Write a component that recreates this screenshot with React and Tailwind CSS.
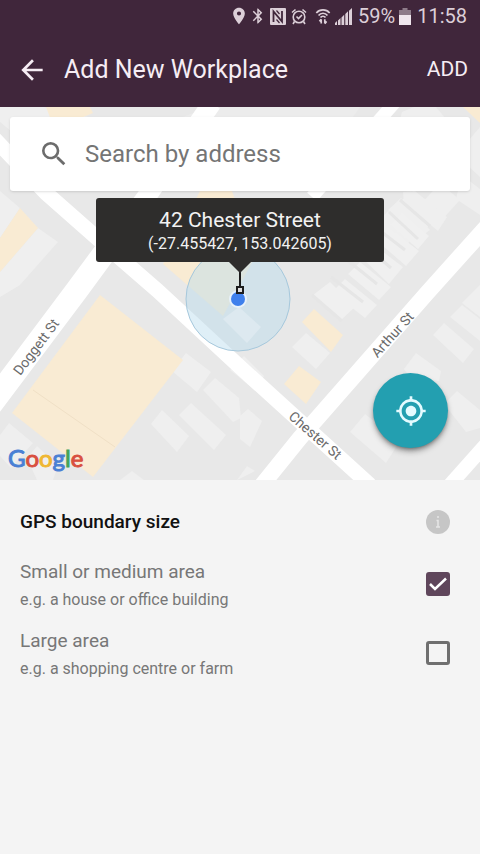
import React, { useState } from 'react';
import { MdArrowBack, MdBluetooth, MdLocationOn, MdMyLocation, MdSearch } from 'react-icons/md';

const AREAS = [
  { id: 'small', title: 'Small or medium area', hint: 'e.g. a house or office building' },
  { id: 'large', title: 'Large area', hint: 'e.g. a shopping centre or farm' },
];

const StatusBar = () => (
  <div className="flex h-8 items-center justify-end pr-[13px] text-xl text-[#dccfd8]">
    <MdLocationOn size={20} />
    <MdBluetooth size={18} />
    <svg className="ml-[3px]" width="16" height="17" viewBox="0 0 16 17">
      <rect width="16" height="17" rx="1" fill="currentColor" />
      <path d="M3.500 14V3.500L12 13.500V3" fill="none" stroke="#40263b" strokeWidth="1.800" />
      <path d="M6.500 2.500L9.500 6M6.500 11.500L9.500 15" fill="none" stroke="#40263b" strokeWidth="1.200" />
    </svg>
    <svg className="ml-[5px]" width="16" height="17" viewBox="0 0 16 17" fill="none" stroke="currentColor" strokeWidth="1.600">
      <circle cx="8" cy="9" r="5.800" />
      <path d="M1 4.500L4.500 1.500M15 4.500L11.500 1.500M3.500 13.500L2 16M12.500 13.500L14 16M5.500 8.500L7.500 10.500 11 7" />
    </svg>
    <svg className="ml-2" width="16" height="17" viewBox="0 0 18 18" fill="none" stroke="currentColor" strokeWidth="1.900">
      <path d="M1.500 5C5.500 0.500 12.500 0.500 16.500 5M4 7.800C6.500 4.500 11.500 4.500 14 7.800M6.200 10.200C7.500 8.200 10.500 8.200 11.800 10.200" />
      <path d="M7 17v-5M5 14.500l2-2.500M11 12v5M13 14.500l-2 2.500" />
    </svg>
    <svg className="ml-1" width="17" height="17" viewBox="0 0 17 17" fill="currentColor">
      <path d="M0 15l2-2v4H0zM3 12.500l2.500-2.500v7H3zM6.500 9.500l2.700-2.700V17H6.500zM10.300 6l2.700-2.700V17h-2.700zM14 2.700L17 0v17h-3z" />
    </svg>
    <span className="ml-[6px]">59%</span>
    <svg className="ml-1" width="12" height="17" viewBox="0 0 12 17">
      <path d="M3.500 0h5v2H12v15H0V2h3.500z" fill="#8d7b89" />
      <path d="M0 7h12v10H0z" fill="#efe6ed" />
    </svg>
    <span className="ml-[6px]">11:58</span>
  </div>
);

const MapCanvas = () => (
  <svg
    className="absolute inset-0 h-full w-full"
    viewBox="0 0 480 373"
    preserveAspectRatio="xMidYMid slice"
    role="img"
    aria-label="Map"
  >
    <rect width="480" height="373" fill="#e8e8e8" />

    {/* blocks */}
    <g fill="#efefef">
      <path d="M0 0h44L88 10 48 55 0 15zM0 84L20 101 0 131zM38 121l20 14-38 43-20 12v-25z" />
      <path d="M150 22l60 -22h150l-60 84h-130z" fill="#ececec" />
      <path d="M402 5l12-5h22l10 12-10 8h-38z" />
      <path d="M480 20l-24 28 24 22zM462 68l18 14v26l-24-16z" />
      <path d="M420 98l20-22 20 17-20 22z" />
      <path d="M408 88l15 12 14 10-11 12-31-23z" fill="#f1f1f1" />
      <path d="M403 85l12-1 32 26-9 14-34-28zM388 103l13-12 29 32-14 10zM376 117l12-13 27 24-11 13z" />
      <path d="M390 118l12-13 27 24-11 13zM376 133l12-13 31 24-13 15zM362 151l12-13 29 22-14 17zM348 167l12-12 31 25-12 13zM332 185l13-13 32 26-12 13zM313 188l17-13 25 25-15 14z" fill="#f0f0f0" />
      <path d="M172 264l14-18 25 19-14 20zM151 317l11-14 27 26-12 16zM179 308l12-12 35 32-12 15zM203 283l12-12 24 20 2 20-8 4zM230 263l14-14 20 20-8 15z" />
      <path d="M292 240l14-14 24 20-14 16zM240 309l8-7 14 12-12 26-10-8z" />
      <path d="M433 228l11-12 30 26-11 14zM450 210l12-12 18 14v22zM462 196l18-18v32z" />
      <path d="M404 262l12-16 25 18-2 10-30-5zM350 325l15-18 35 27-14 22zM444 297l13-13 23 19v18l-14 4z" />
      <path d="M0 328l9-12 24 20-22 25-11-12zM27 351l10-12 21 20-5 14h-16zM120 373l12-9 12 9zM237 373l10-14 8 5z" />
    </g>
    {/* gaps between the lots */}
    <path
      d="M400 93l30 26M389 105l29 27M374 119l31 24M361 135l30 26M346 152l31 25M331 170l32 25M312 188l30 26"
      stroke="#e6e6e6"
      strokeWidth="3"
    />

    <g fill="#f9ebd3">
      <path d="M46 0h44l3 6-17 7h-25zM463 0h17v16zM20 101L38 121 0 165v-34z" />
      <path d="M100 188l83 65-90 117L12 306z" />
      <path d="M200 84h32l23 66-32 59-60-52z" />
      <path d="M302 215l12-13 29 26-12 17zM284 277l15-18 22 16-15 22z" />
    </g>
    <path d="M33 283L115 340" fill="none" stroke="#f0e0c6" />

    {/* roads */}
    <g fill="none" stroke="#fff">
      <path d="M-10 27L46 86 105 138 157 183 240 260 370 378" strokeWidth="15" />
      <path d="M-16 307L77 183 105 145" strokeWidth="23" />
      <path d="M105 145L150 85 212 -4" strokeWidth="19" />
      <path d="M396 -6L312 90" strokeWidth="13" />
      <path d="M262 378L300 331 427 186 488 118" strokeWidth="16" />
      <path d="M448 380L488 335" strokeWidth="14" />
    </g>

    <g fill="#6b6b6b" className="font-[Roboto,sans-serif] text-[14px]" textAnchor="middle">
      <text transform="translate(40 243) rotate(-53)">Doggett St</text>
      <text transform="translate(396 231) rotate(-48)">Arthur St</text>
      <text transform="translate(312 332) rotate(41)">Chester St</text>
    </g>

    {/* current position */}
    <circle cx="238" cy="192" r="52" fill="#b9dbee" fillOpacity="0.45" stroke="#a6c8dc" />
    <path d="M223 212l16-12 22 20-14 16z" fill="#dde9f0" />
    <circle cx="238" cy="192" r="9" fill="#e8f2fb" />
    <circle cx="238" cy="192" r="7" fill="#3f80ec" />
    <path d="M240 160v20" stroke="#1c1c1c" strokeWidth="2" />
    <rect x="237" y="180" width="6" height="6" fill="#ddd" stroke="#1c1c1c" strokeWidth="2" />
  </svg>
);

const GoogleLogo = () => (
  <div
    className="absolute bottom-2 left-2 font-[Lato,sans-serif] text-2xl leading-7 font-normal [-webkit-text-stroke:1px]"
    aria-label="Google"
  >
    <span className="text-[#4a80d4]">G</span>
    <span className="text-[#d9503f]">o</span>
    <span className="text-[#efb732]">o</span>
    <span className="text-[#4a80d4]">g</span>
    <span className="text-[#41a35a]">l</span>
    <span className="text-[#d9503f]">e</span>
  </div>
);

const AreaOption = ({ area, checked, onChange }) => (
  <label htmlFor={area.id} className="flex items-center justify-between">
    <span>
      <span className="block text-[19px] leading-7">{area.title}</span>
      <span className="block text-base leading-7">{area.hint}</span>
    </span>
    <span className="mb-1 grid">
      <input
        id={area.id}
        type="checkbox"
        checked={checked}
        onChange={onChange}
        className="col-start-1 row-start-1 size-6 appearance-none rounded-[3px] border-[3px] border-[#6f6f6f] checked:border-[#5f465b] checked:bg-[#5f465b]"
      />
      {checked && (
        <svg className="pointer-events-none col-start-1 row-start-1" width="24" height="24" viewBox="0 0 24 24">
          <path d="M4 12l5 5L20 6.500" fill="none" stroke="#fff" strokeWidth="2.500" />
        </svg>
      )}
    </span>
  </label>
);

const App = () => {
  const [selected, setSelected] = useState('small');

  return (
    <div className="min-h-screen bg-[#f4f4f4] font-[Roboto,sans-serif]">
      <header className="bg-[#40263b] text-[#f6edf4]">
        <StatusBar />
        <div className="flex h-[75px] items-center px-3 pl-4">
          <button type="button" aria-label="Back">
            <MdArrowBack size={32} />
          </button>
          <h1 className="ml-4 flex-1 text-[25px]">Add New Workplace</h1>
          <button type="button" className="text-[21px]">ADD</button>
        </div>
      </header>

      <main>
        <section className="relative h-[373px] overflow-hidden p-[10px]">
          <MapCanvas />
          <div className="relative flex h-[74px] items-center rounded-[3px] bg-white px-7 shadow">
            <MdSearch size={32} className="text-[#6c6c6c]" />
            <input
              type="text"
              aria-label="Search by address"
              placeholder="Search by address"
              className="ml-[15px] min-w-0 flex-1 text-2xl outline-none placeholder:text-[#757575]"
            />
          </div>

          <div className="relative mx-auto mt-[7px] flex h-16 w-72 flex-col items-center justify-center rounded-[3px] bg-[#2e2d2c] text-[#f2f2f2]">
            <div className="text-[21px] leading-7">42 Chester Street</div>
            <div className="text-base leading-5">(-27.455427, 153.042605)</div>
            <svg className="absolute top-full" width="22" height="11" viewBox="0 0 22 11">
              <path d="M0 0h22L11 11z" fill="#2e2d2c" />
            </svg>
          </div>

          <GoogleLogo />
          <button
            type="button"
            aria-label="My location"
            className="absolute right-8 bottom-8 flex size-[75px] items-center justify-center rounded-full bg-[#239fb0] text-[#e4fbff] shadow-md shadow-black/40"
          >
            <MdMyLocation size={32} />
          </button>
        </section>

        <section className="px-5 pt-7 pr-[30px] text-[#777]">
          <div className="flex items-center justify-between">
            <h2 className="text-[19px] leading-7 font-medium text-[#111]">GPS boundary size</h2>
            <button type="button" aria-label="About GPS boundary size">
              <svg width="24" height="24" viewBox="0 0 24 24">
                <circle cx="12" cy="12" r="12" fill="#c6c6c6" />
                <path d="M12 6v2M10.500 10.500H12V17M10 17h4" fill="none" stroke="#e6e6e6" strokeWidth="1.500" />
              </svg>
            </button>
          </div>
          <div className="mt-[22px] flex flex-col gap-[13px]">
            {AREAS.map((area) => (
              <AreaOption
                key={area.id}
                area={area}
                checked={selected === area.id}
                onChange={() => setSelected(area.id)}
              />
            ))}
          </div>
        </section>
      </main>
    </div>
  );
};

export default App;
